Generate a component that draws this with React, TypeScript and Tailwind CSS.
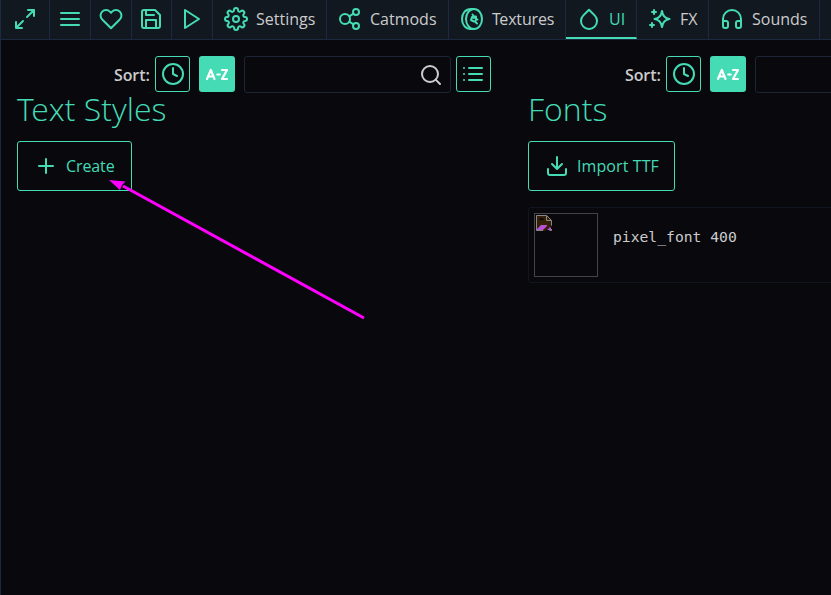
import type { ReactNode } from "react";

function Icon({ children, className = "" }: { children: ReactNode; className?: string }) {
  return (
    <svg viewBox="0 0 24 24" fill="none" stroke="currentColor" strokeWidth="2" strokeLinecap="round" strokeLinejoin="round" className={`size-6 shrink-0 ${className}`}>
      {children}
    </svg>
  );
}

const icons = {
  expand: <path d="M15 3h6v6M21 3l-7 7M9 21H3v-6M3 21l7-7" />,
  menu: <path d="M3 6h18M3 12h18M3 18h18" />,
  heart: <path d="M20.84 4.61a5.5 5.5 0 0 0-7.78 0L12 5.67l-1.06-1.06a5.5 5.5 0 0 0-7.78 7.78l1.06 1.06L12 21.23l7.78-7.78 1.06-1.06a5.5 5.5 0 0 0 0-7.78z" />,
  save: <path d="M19 21H5a2 2 0 0 1-2-2V5a2 2 0 0 1 2-2h11l5 5v11a2 2 0 0 1-2 2zM17 21v-8H7v8M7 3v5h8" />,
  play: <path d="M5 3l14 9-14 9z" />,
  settings: (
    <>
      <circle cx="12" cy="12" r="3" />
      <path d="M19.4 15a1.65 1.65 0 0 0 .33 1.82l.06.06a2 2 0 0 1-2.83 2.83l-.06-.06a1.65 1.65 0 0 0-2.8 1.17V21a2 2 0 0 1-4 0v-.09A1.65 1.65 0 0 0 9 19.4a1.65 1.65 0 0 0-1.82.33l-.06.06a2 2 0 0 1-2.83-2.83l.06-.06A1.65 1.65 0 0 0 3.09 14H3a2 2 0 0 1 0-4h.09A1.65 1.65 0 0 0 4.6 9a1.65 1.65 0 0 0-.33-1.82l-.06-.06a2 2 0 0 1 2.83-2.83l.06.06A1.65 1.65 0 0 0 9 4.68 1.65 1.65 0 0 0 10 3.09V3a2 2 0 0 1 4 0v.09a1.65 1.65 0 0 0 2.8 1.26l.06-.06a2 2 0 0 1 2.83 2.83l-.06.06A1.65 1.65 0 0 0 19.4 9c.26.6.85 1 1.51 1H21a2 2 0 0 1 0 4h-.09a1.65 1.65 0 0 0-1.51 1z" />
    </>
  ),
  catmods: (
    <>
      <circle cx="7" cy="12" r="5" />
      <circle cx="18" cy="5" r="3" />
      <circle cx="18" cy="19" r="3" />
      <path d="M11.2 9.3l4.3-2.7M11.2 14.7l4.3 2.7" />
    </>
  ),
  textures: (
    <>
      <ellipse cx="14" cy="12" rx="8" ry="10" />
      <path d="M14 2h-3C5.5 2 2 6.500 2 12s3.500 10 9 10h3" />
      <path d="M12.500 7.500l1.500 2h2v3h1.500M16 13l-1 1.500 2 2M14 14.500l-3-1.500 1-3 2 1" />
    </>
  ),
  droplet: <path d="M12 2.690l5.660 5.660a8 8 0 1 1-11.310 0z" />,
  sparkles: (
    <>
      <path d="M14 4c.7 5 2.500 7.300 7.500 8-5 .7-6.800 3-7.500 8-.7-5-2.500-7.300-7.500-8 5-.7 6.800-3 7.500-8z" />
      <path d="M6 3v4M4 5h4M4 16v4M2 18h4" />
    </>
  ),
  headphones: <path d="M3 18v-6a9 9 0 0 1 18 0v6M21 19a2 2 0 0 1-2 2h-1a2 2 0 0 1-2-2v-3a2 2 0 0 1 2-2h3zM3 19a2 2 0 0 0 2 2h1a2 2 0 0 0 2-2v-3a2 2 0 0 0-2-2H3z" />,
  clock: <><circle cx="12" cy="12" r="10" /><path d="M12 6v6l4 2" /></>,
  search: <><circle cx="11" cy="11" r="8" /><path d="M21 21l-4.350-4.350" /></>,
  list: <path d="M8 6h13M8 12h13M8 18h13M3 6h.01M3 12h.01M3 18h.01" />,
  plus: <path d="M12 5v14M5 12h14" />,
  download: <path d="M3 15v4a2 2 0 0 0 2 2h14a2 2 0 0 0 2-2v-4M7 10l5 5 5-5M12 15V3" />,
};

const tabs = [
  { icon: icons.expand, width: "w-[49px]" },
  { icon: icons.menu, width: "w-[41px]" },
  { icon: icons.heart, width: "w-[41px]" },
  { icon: icons.save, width: "w-10 pr-px" },
  { icon: icons.play, width: "w-[41px]" },
  { icon: icons.settings, width: "w-[114px]", label: "Settings" },
  { icon: icons.catmods, width: "w-[122px]", label: "Catmods" },
  { icon: icons.textures, width: "w-[117px]", label: "Textures", tight: true },
  { icon: icons.droplet, width: "w-[71px]", label: "UI", active: true },
  { icon: icons.sparkles, width: "w-[72px]", label: "FX" },
  { icon: icons.headphones, width: "w-[111px]", label: "Sounds" },
];

function Toolbar({ view = false }: { view?: boolean }) {
  return (
    <div className="flex h-[37px] items-start pl-[97px]">
      <b className="mr-1 w-[37px] whitespace-nowrap pt-[7px] font-semibold leading-6 tracking-[-0.1px]">Sort:</b>
      <button className="flex h-9 w-[35px] shrink-0 items-center justify-center rounded-[3px] border border-[#44dbb5] text-[#44dbb5]"><Icon>{icons.clock}</Icon></button>
      <button className="ml-[9px] flex h-9 w-9 shrink-0 items-center justify-center rounded-[3px] bg-[#44dbb5] text-white">
        <Icon><path d="M2 17L5.800 8l3.700 9M3.500 14.500h4.500M12.300 12.500h2.500M17 8h5l-5 9h5" strokeWidth="2.200" /></Icon>
      </button>
      <div className="ml-[9px] flex h-[37px] w-[207px] shrink-0 items-center justify-end rounded-[3px] border border-[#1c2536] pr-[7px]"><Icon>{icons.search}</Icon></div>
      {view && <button className="ml-[5px] flex h-9 w-[35px] shrink-0 items-center justify-center rounded-[3px] border border-[#44dbb5] pr-px text-[#44dbb5]"><Icon>{icons.list}</Icon></button>}
    </div>
  );
}

export default function App() {
  return (
    <div className="relative flex h-[595px] w-[831px] flex-col overflow-hidden border-l border-[#1a2a40] bg-[#08080d] font-['Open_Sans','Noto_Sans',sans-serif] text-base text-[#ccc]">
      <nav className="flex h-10 shrink-0 border-b border-[#1c2940] bg-[#111820]">
        {tabs.map((tab, i) => (
          <div key={i} className={`flex h-[39px] shrink-0 items-start border-r border-[#1c2940] pt-[7px] ${tab.width} ${tab.label ? "pl-[11px]" : "justify-center"} ${tab.active ? "border-b-2 border-b-[#44dbb5] text-[#44dbb5]" : ""}`}>
            <Icon className="text-[#44dbb5]">{tab.icon}</Icon>
            {tab.label && <span className={`ml-2 whitespace-nowrap leading-6 ${tab.tight ? "first-letter:tracking-[-1.5px] tracking-[-0.15px]" : ""}`}>{tab.label}</span>}
          </div>
        ))}
      </nav>
      <main className="grid grow grid-cols-[511px_511px] pt-4">
        <section className="pl-4">
          <Toolbar view />
          <h1 className="mt-[-6px] h-[54px] text-[32px] font-light leading-[44px] text-[#44dbb5]"><span className="tracking-[-2.5px]">T</span>ext Styles</h1>
          <button className="flex h-[50px] w-[115px] items-center rounded-[3px] border border-[#44dbb5] pl-4 text-[#44dbb5]"><Icon>{icons.plus}</Icon><span className="ml-2 tracking-[-0.1px]">Create</span></button>
        </section>
        <section className="pl-4">
          <Toolbar />
          <h1 className="mt-[-6px] h-[54px] text-[32px] font-light leading-[44px] text-[#44dbb5]">Fonts</h1>
          <button className="flex h-[50px] w-[147px] items-center rounded-[3px] border border-[#44dbb5] pl-4 text-[#44dbb5]"><Icon>{icons.download}</Icon><span className="ml-2 whitespace-nowrap tracking-[0.1px]">Import TTF</span></button>
          <div className="mt-4 flex h-[76px] rounded-[3px] border border-[#11151f] p-[5px]">
            <div className="size-16 shrink-0 border border-[#444448] p-px">
              <svg viewBox="0 0 16 16" className="size-4">
                <path d="M0 0h11l5 5v6L9 16H0z" fill="#342006" />
                <path d="M3 5V4h1V3h3v1h1v1z" fill="#08080d" />
                <path d="M0 15l5-5h6v1l-4 4zM11 15l3-3 1 1v2z" fill="#b653d4" />
                <path d="M.5 15.500V.5h10l5 5v5M10.500.5v5h5M15.500 14v1.500h-2M.5 15.500H7" fill="none" stroke="#89868a" />
              </svg>
            </div>
            <span className="ml-[15px] mt-3 whitespace-pre font-['DejaVu_Sans_Mono',monospace] text-[14.7px] leading-6">pixel_font 400</span>
          </div>
        </section>
      </main>
      <svg viewBox="0 0 260 145" className="absolute left-[107px] top-[178px] h-[145px] w-[260px]">
        <path d="M15 8L256 140" stroke="#f0f" strokeWidth="3" />
        <path d="M1 2L17.500 3.500 14 7 12 12z" fill="#f0f" />
      </svg>
    </div>
  );
}
